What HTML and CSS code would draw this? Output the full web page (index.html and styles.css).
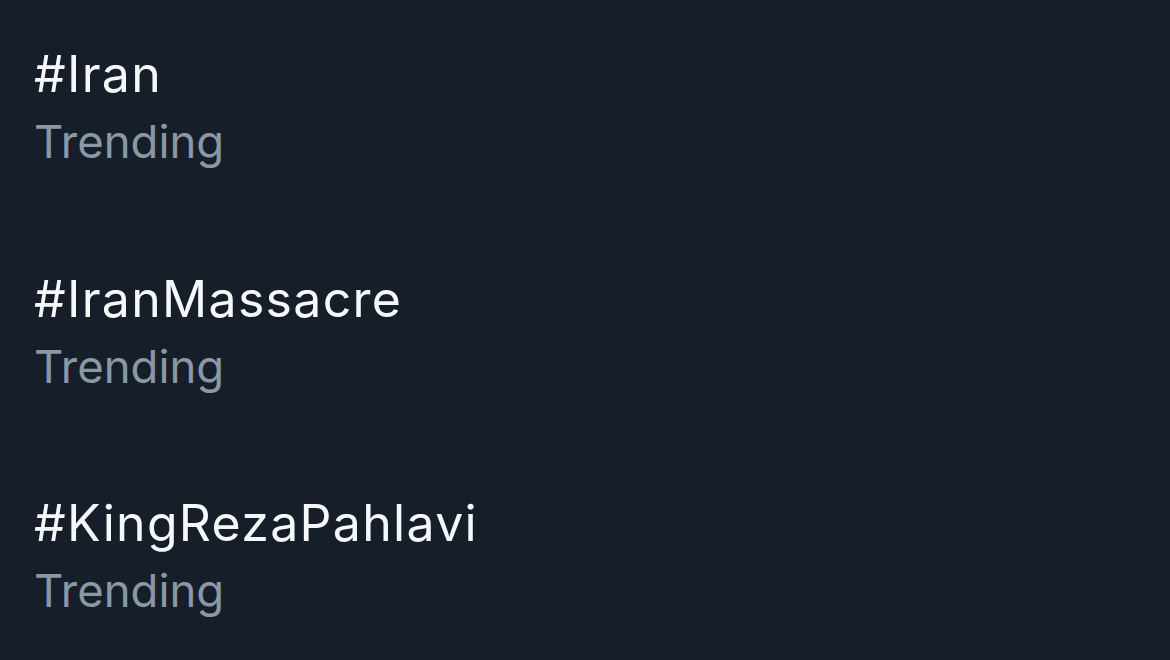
FILE: index.html
```html
<!DOCTYPE html>
<html>
<head>
<meta charset="utf-8">
<link rel="stylesheet" href="styles.css">
</head>
<body>
<ul class="trends">
  <li class="trend">
    <div class="tag">#Iran</div>
    <div class="meta">Trending</div>
  </li>
  <li class="trend">
    <div class="tag">#IranMassacre</div>
    <div class="meta">Trending</div>
  </li>
  <li class="trend">
    <div class="tag">#KingRezaPahlavi</div>
    <div class="meta">Trending</div>
  </li>
</ul>
</body>
</html>
```
FILE: styles.css
```css
html, body {
  margin: 0;
  padding: 0;
  background: #161e29;
  height: 100%;
}
body {
  font-family: Inter, "Noto Sans", sans-serif;
  overflow: hidden;
}
.trends {
  list-style: none;
  margin: 0;
  padding: 44px 0 0 34px;
  display: flex;
  flex-direction: column;
  gap: 88.5px;
}
.trend {
  display: flex;
  flex-direction: column;
}
.tag {
  color: #f5f7fa;
  font-size: 50px;
  line-height: 60px;
  letter-spacing: 1.3px;
}
.meta {
  color: #8a97a4;
  font-size: 45.5px;
  line-height: 76px;
}
```
